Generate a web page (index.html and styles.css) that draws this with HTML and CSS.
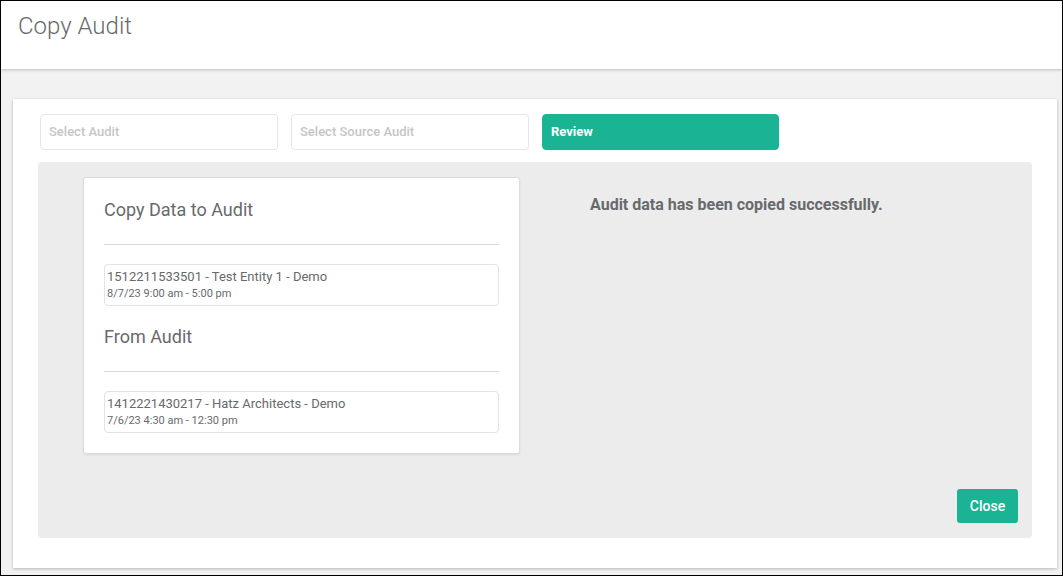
FILE: index.html
```html
<!DOCTYPE html>
<html lang="en">
<head>
<meta charset="utf-8">
<title>Copy Audit</title>
<link rel="stylesheet" href="styles.css">
</head>
<body>
<div class="frame">
  <header class="page-header">
    <h1 class="page-title">Copy Audit</h1>
  </header>
  <main class="panel">
    <div class="selectors">
      <div class="select-box">Select Audit</div>
      <div class="select-box">Select Source Audit</div>
      <div class="review-btn">Review</div>
    </div>
    <section class="result-area">
      <div class="result-row">
        <div class="audit-card">
          <h2 class="card-heading">Copy Data to Audit</h2>
          <div class="card-rule"></div>
          <div class="audit-item">
            <div class="item-title">1512211533501 - Test Entity 1 - Demo</div>
            <div class="item-date">8/7/23 9:00 am - 5:00 pm</div>
          </div>
          <h2 class="card-heading second">From Audit</h2>
          <div class="card-rule"></div>
          <div class="audit-item">
            <div class="item-title">1412221430217 - Hatz Architects - Demo</div>
            <div class="item-date">7/6/23 4:30 am - 12:30 pm</div>
          </div>
        </div>
        <p class="success-msg">Audit data has been copied successfully.</p>
      </div>
      <div class="actions">
        <button class="close-btn" type="button">Close</button>
      </div>
    </section>
  </main>
</div>
</body>
</html>
```
FILE: styles.css
```css
* { box-sizing: border-box; }
html, body { margin: 0; padding: 0; }
body {
  font-family: Roboto, "Liberation Sans", Arial, sans-serif;
  background: #fff;
}
.frame {
  width: 1063px;
  height: 576px;
  border: 1px solid #000;
  background: #f2f2f2;
  display: flex;
  flex-direction: column;
  overflow: hidden;
}
.page-header {
  height: 68px;
  flex: none;
  background: #fff;
  box-shadow: 0 1px 3px rgba(0,0,0,0.22);
  position: relative;
  z-index: 1;
}
.page-title {
  margin: 0;
  padding: 11px 0 0 17px;
  font-size: 24px;
  line-height: 28px;
  font-weight: 300;
  color: #676a6c;
}
.panel {
  margin: 30px 5px 0 12px;
  height: 469px;
  background: #fff;
  box-shadow: 0 1px 3px rgba(0,0,0,0.25);
  padding: 15px 24px 0 25px;
}
.selectors {
  display: flex;
  gap: 13px;
  padding-left: 2px;
}
.select-box, .review-btn {
  width: 238px;
  height: 36px;
  border-radius: 4px;
  font-size: 13px;
  line-height: 34px;
  padding-left: 8px;
}
.select-box {
  border: 1px solid #e5e6e7;
  color: #c6c6c6;
  font-weight: 500;
}
.review-btn {
  width: 237px;
  border: 1px solid #1ab394;
  background: #1ab394;
  color: #fff;
  font-weight: 700;
}
.result-area {
  margin-top: 12px;
  width: 994px;
  height: 376px;
  background: #ececec;
  border-radius: 4px;
  padding: 15px 14px 15px 45px;
  display: flex;
  flex-direction: column;
  justify-content: space-between;
}
.result-row {
  display: flex;
  align-items: flex-start;
}
.audit-card {
  width: 437px;
  background: #fff;
  border: 1px solid #dcdcdc;
  border-radius: 3px;
  box-shadow: 0 1px 2px rgba(0,0,0,0.08);
  padding: 0 20px 20px;
  display: flex;
  flex-direction: column;
}
.card-heading {
  margin: 22px 0 0;
  font-size: 18px;
  line-height: 20px;
  font-weight: 400;
  color: #676a6c;
}
.card-heading.second { margin-top: 21px; }
.card-rule {
  margin-top: 24px;
  height: 1px;
  background: #d9d9d9;
}
.audit-item {
  margin-top: 19px;
  height: 42px;
  border: 1px solid #e3e3e3;
  border-radius: 4px;
  padding: 3px 2px;
  color: #676a6c;
}
.item-title {
  font-size: 13px;
  line-height: 18px;
}
.item-date {
  font-size: 11px;
  line-height: 16px;
}
.success-msg {
  margin: 18px 0 0 70px;
  font-size: 16px;
  line-height: 20px;
  font-weight: 700;
  color: #676a6c;
}
.actions {
  display: flex;
  justify-content: flex-end;
}
.close-btn {
  width: 61px;
  height: 34px;
  border: none;
  border-radius: 3px;
  background: #1ab394;
  color: #fff;
  font-family: Roboto, "Liberation Sans", Arial, sans-serif;
  font-size: 14px;
  font-weight: 500;
  padding: 0;
}
```
